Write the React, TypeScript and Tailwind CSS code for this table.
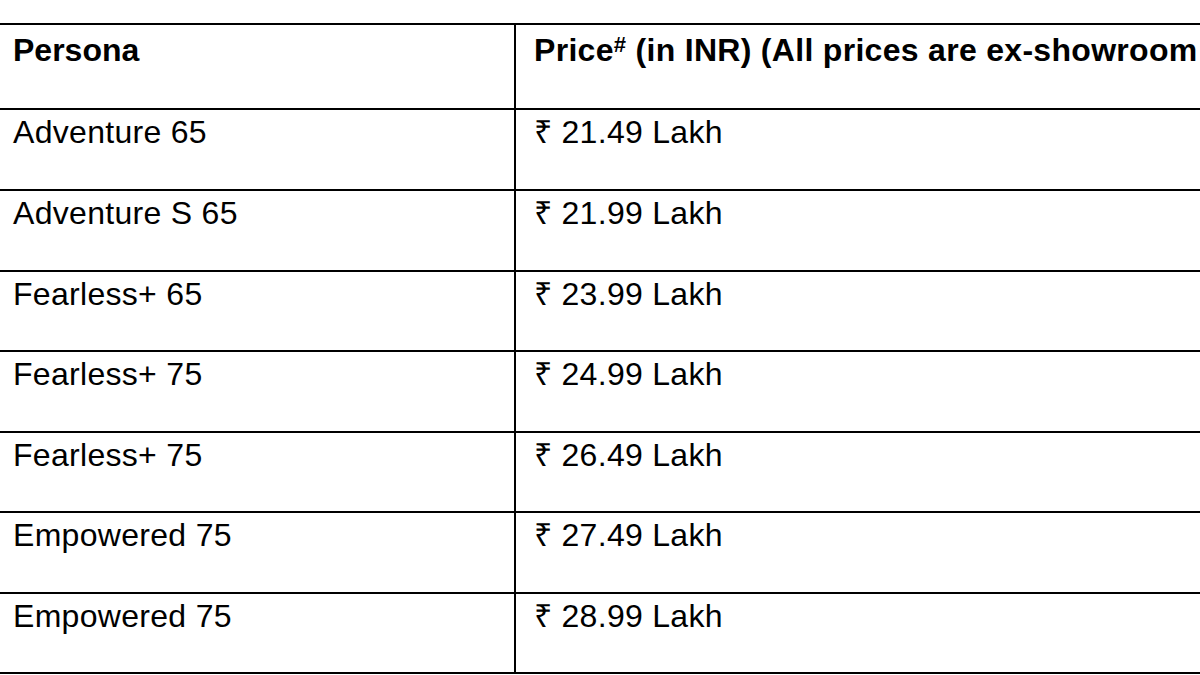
const rows: { persona: string; price: string; h: string }[] = [
  { persona: "Adventure 65", price: "21.49", h: "h-[81px]" },
  { persona: "Adventure S 65", price: "21.99", h: "h-[81px]" },
  { persona: "Fearless+ 65", price: "23.99", h: "h-[80px]" },
  { persona: "Fearless+ 75", price: "24.99", h: "h-[81px]" },
  { persona: "Fearless+ 75", price: "26.49", h: "h-[80px]" },
  { persona: "Empowered 75", price: "27.49", h: "h-[81px]" },
  { persona: "Empowered 75", price: "28.99", h: "h-[80px]" },
];

export default function App() {
  return (
    <div className="w-[1200px] h-[675px] overflow-hidden bg-white text-black font-['Liberation_Sans',Arial,sans-serif] text-[32px] leading-[36px]">
      <div className="pt-[23px] w-[1400px] -ml-[2px]">
        <div className="border-[2px] border-black">
          {/* header */}
          <div className="flex h-[83px] whitespace-nowrap">
            <div className="w-[516px] border-r-[2px] border-black pl-[13px] pt-[7px] font-bold">
              Persona
            </div>
            <div className="flex-1 pl-[18px] pt-[7px] font-bold tracking-[0.3px]">
              Price<span className="text-[22px] leading-none align-top relative top-[2px]">#</span> (in INR) (All prices are ex-showroom
            </div>
          </div>
          {rows.map((r, i) => (
            <div key={i} className={`flex whitespace-nowrap tracking-[0.3px] border-t-[2px] border-black ${r.h}`}>
              <div className="w-[516px] border-r-[2px] border-black pl-[13px] pt-[4px]">
                {r.persona}
              </div>
              <div className="flex-1 pl-[18px] pt-[4px]">
                ₹ {r.price} Lakh
              </div>
            </div>
          ))}
        </div>
      </div>
    </div>
  );
}
